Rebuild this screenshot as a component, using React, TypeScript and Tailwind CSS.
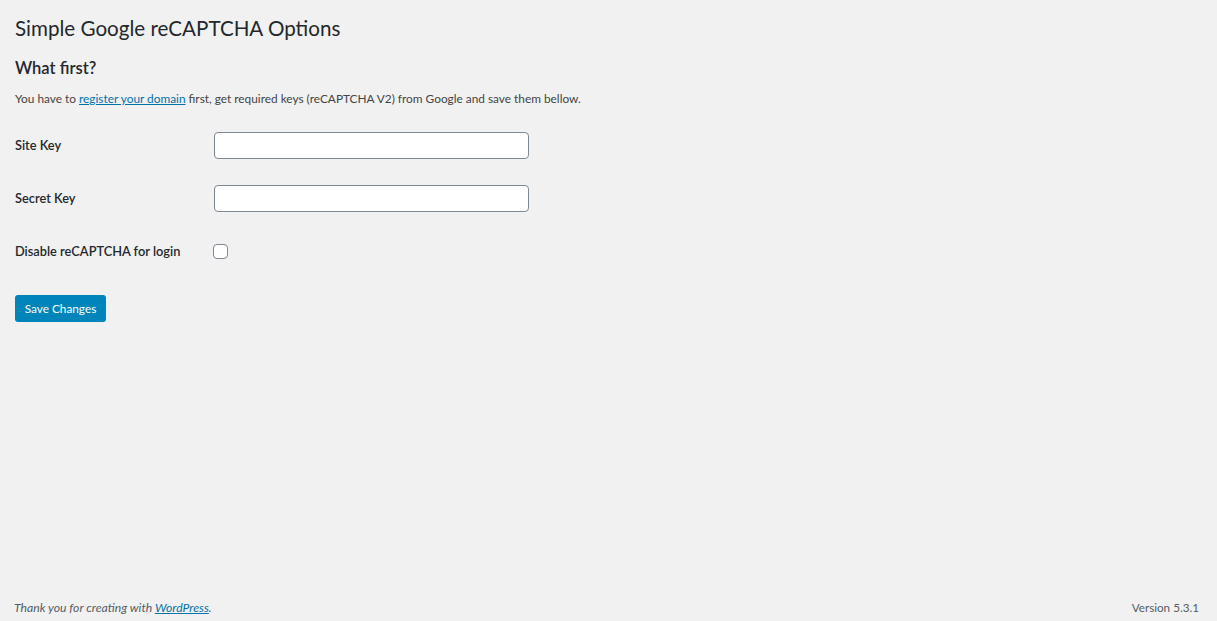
const font = { fontFamily: '"Segoe UI", Lato, "Liberation Sans", sans-serif' };

export default function App() {
    return (
        <div className="flex flex-col min-h-[621px] bg-[#f1f1f1] text-[#444]" style={font}>
            <div className="px-[15px]">
                <h1 className="mt-[13px] h-[30px] leading-[30px] text-[20.6px] font-normal text-[#23282d]">
                    Simple Google reCAPTCHA Options
                </h1>
                <h2 className="mt-[14px] h-[22px] leading-[22px] text-[16.5px] font-semibold text-[#23282d]">
                    What first?
                </h2>
                <p className="mt-[10px] h-[20px] leading-[20px] text-[11.85px]">
                    You have to{" "}
                    <a href="#" className="text-[#0073aa] underline">
                        register your domain
                    </a>{" "}
                    first, get required keys (reCAPTCHA V2) from Google and save them bellow.
                </p>
                <div className="mt-[10px] flex flex-col">
                    <div className="flex h-[53px] items-center">
                        <label className="w-[199px] text-[12.8px] font-semibold text-[#23282d]">Site Key</label>
                        <input
                            type="text"
                            className="h-[27px] w-[315px] rounded-[4px] border border-[#7e8993] bg-white"
                        />
                    </div>
                    <div className="flex h-[53px] items-center">
                        <label className="w-[199px] text-[12.8px] font-semibold text-[#23282d]">Secret Key</label>
                        <input
                            type="text"
                            className="h-[27px] w-[315px] rounded-[4px] border border-[#7e8993] bg-white"
                        />
                    </div>
                    <div className="flex h-[53px] items-center">
                        <label className="w-[198px] text-[12.8px] font-semibold text-[#23282d]">
                            Disable reCAPTCHA for login
                        </label>
                        <span className="h-[15px] w-[15px] rounded-[4px] border border-[#7e8993] bg-white" />
                    </div>
                </div>
                <button className="mt-[17px] h-[27px] w-[91px] rounded-[3px] bg-[#0085ba] text-[11.8px] text-white">
                    Save Changes
                </button>
            </div>
            <div className="mt-auto flex h-[26px] items-center justify-between pl-[14px] pr-[18px] text-[#555d66]">
                <span className="text-[12.2px] italic">
                    Thank you for creating with{" "}
                    <a href="#" className="text-[#0073aa] underline">
                        WordPress
                    </a>
                    .
                </span>
                <span className="text-[11.7px]">Version 5.3.1</span>
            </div>
        </div>
    );
}
